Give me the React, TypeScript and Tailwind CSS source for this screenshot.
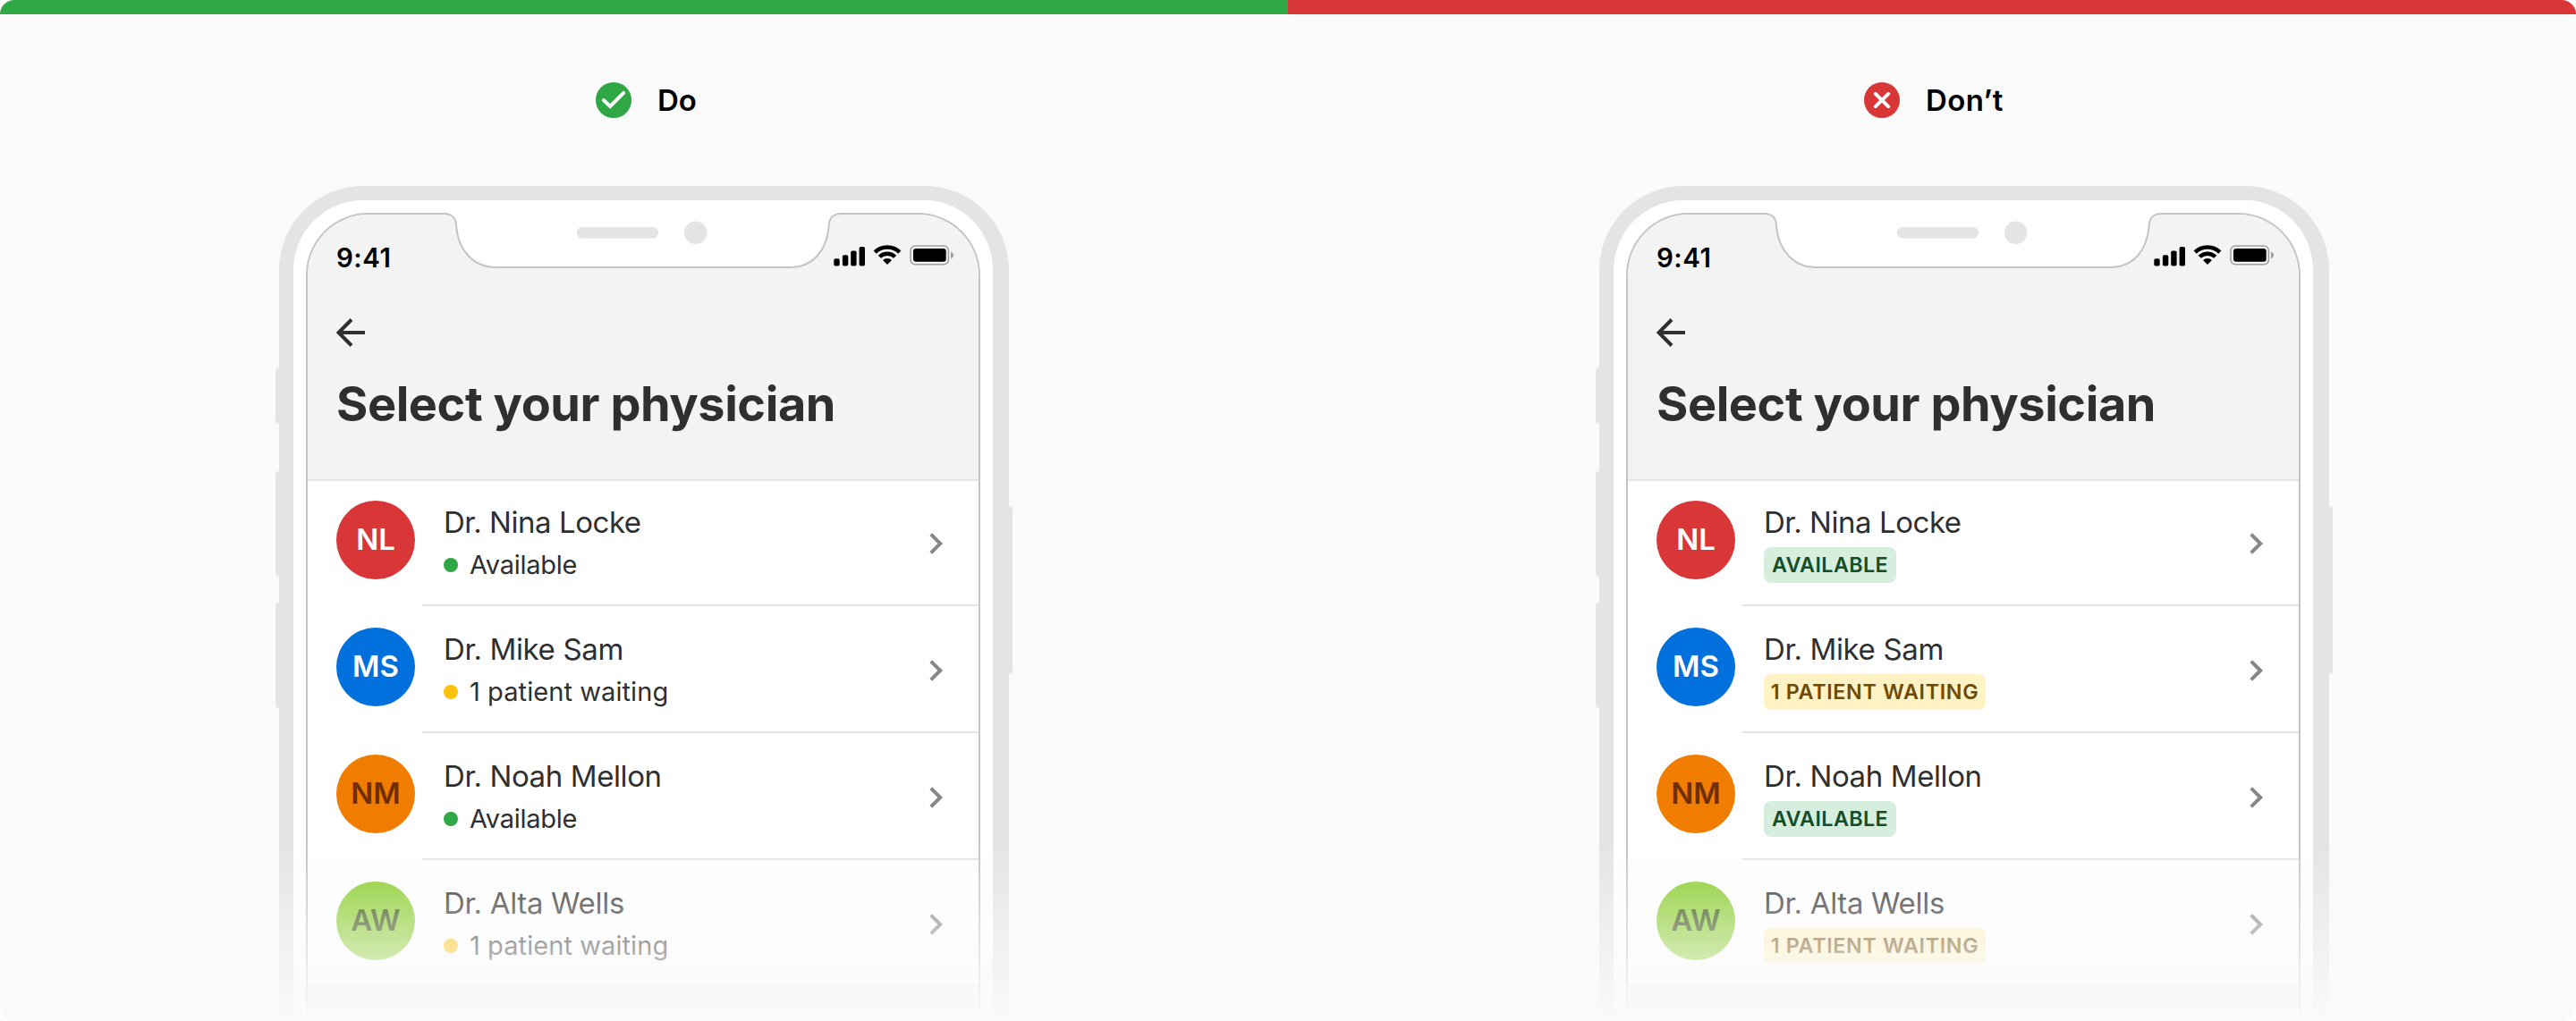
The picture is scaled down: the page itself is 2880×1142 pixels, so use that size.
import React from "react";

type Tone = "green" | "yellow";

interface Physician {
  name: string;
  nameTracking: string;
  initials: string;
  avatar: string;
  status: string;
  tone: Tone;
}

const physicians: Physician[] = [
  { name: "Dr. Nina Locke", nameTracking: "tracking-[-0.46px]", initials: "NL", avatar: "bg-[#d93737] text-white", status: "Available", tone: "green" },
  { name: "Dr. Mike Sam", nameTracking: "tracking-[-0.36px]", initials: "MS", avatar: "bg-[#0070dd] text-white", status: "1 patient waiting", tone: "yellow" },
  { name: "Dr. Noah Mellon", nameTracking: "tracking-[-0.39px]", initials: "NM", avatar: "bg-[#f07c00] text-[#6f2f00]", status: "Available", tone: "green" },
  { name: "Dr. Alta Wells", nameTracking: "tracking-[-0.32px]", initials: "AW", avatar: "bg-[#86cc27] text-[#2f4a09]", status: "1 patient waiting", tone: "yellow" },
];

const dotTones: Record<Tone, string> = {
  green: "bg-[#2ea744]",
  yellow: "bg-[#ffc10a]",
};

const statusTracking: Record<Tone, string> = {
  green: "tracking-[-0.25px]",
  yellow: "tracking-[0.08px]",
};

const badgeTones: Record<Tone, string> = {
  green: "w-[148px] bg-[#d6eedd] text-[#154d26] tracking-[0.41px]",
  yellow: "w-[248px] bg-[#fff2c4] text-[#6e4a07] tracking-[0.67px]",
};

function StatusDot({ physician }: { physician: Physician }) {
  return (
    <div className="flex h-10 items-center gap-[13px]">
      <span className={`size-4 rounded-full ${dotTones[physician.tone]}`} />
      <span className={`text-[29px] leading-10 ${statusTracking[physician.tone]}`}>{physician.status}</span>
    </div>
  );
}

function StatusBadge({ physician }: { physician: Physician }) {
  return (
    <div className={`flex h-10 items-center justify-center whitespace-nowrap rounded-lg text-[23.3px] font-semibold uppercase ${badgeTones[physician.tone]}`}>
      {physician.status}
    </div>
  );
}

function StatusIcons() {
  return (
    <svg width="136" height="28" viewBox="0 0 136 28" fill="none">
      <g fill="#000">
        <rect x="0.3" y="15.3" width="6.4" height="8.3" rx="1.8" />
        <rect x="9.9" y="11.3" width="6.4" height="12.3" rx="1.8" />
        <rect x="19.2" y="6.5" width="6.4" height="17.1" rx="1.8" />
        <rect x="28.6" y="2" width="6.4" height="21.6" rx="1.8" />
        <path d="M60 22L55 17A7 7 0 0 1 65 17Z" />
        <rect x="89" y="4" width="36.7" height="14.8" rx="3" />
      </g>
      <path d="M46.2 8.2A19.5 19.5 0 0 1 73.8 8.2" stroke="#000" strokeWidth="4.6" />
      <path d="M51.3 13.3A12.3 12.3 0 0 1 68.7 13.3" stroke="#000" strokeWidth="4.4" />
      <rect x="86" y="1" width="42.4" height="20.8" rx="5.3" stroke="#a0a0a0" strokeWidth="1.6" />
      <path d="M131 7.5C133 8.4 134 9.8 134 11.4C134 13 133 14.3 131 15.2Z" fill="#a0a0a0" />
    </svg>
  );
}

function Notch() {
  return (
    <svg className="absolute left-0 top-0" width="754" height="66" viewBox="0 0 754 66" fill="none">
      <path
        d="M155 0V1C163 1 167.6 6 168 14C170 42 187 61 213 61H541C567 61 582.7 42 584.7 14C585.1 6 590 1 598 1V0Z"
        fill="#fff"
      />
      <path
        d="M155 1C163 1 167.6 6 168 14C170 42 187 61 213 61H541C567 61 582.7 42 584.7 14C585.1 6 590 1 598 1"
        stroke="#c4c4c4"
        strokeWidth="2"
      />
      <rect x="302.7" y="16" width="91.3" height="12.6" rx="6.3" fill="#e4e4e4" />
      <circle cx="435.7" cy="22.2" r="12.8" fill="#e4e4e4" />
    </svg>
  );
}

function PhysicianRow({ physician, badge }: { physician: Physician; badge: boolean }) {
  return (
    <li className="flex h-[142px] pl-8">
      <div className={`mt-6 flex size-[88px] shrink-0 items-center justify-center rounded-full text-[33px] font-semibold ${physician.avatar}`}>
        {physician.initials}
      </div>
      <div className="ml-2 flex grow justify-between border-b-2 border-[#e4e4e4] pl-6 pr-[38px]">
        <div className="flex flex-col gap-2 pt-7">
          <span className={`text-[33px] leading-10 ${physician.nameTracking}`}>{physician.name}</span>
          {badge ? <StatusBadge physician={physician} /> : <StatusDot physician={physician} />}
        </div>
        <svg className="mt-[58px]" width="18" height="28" viewBox="0 0 18 28" fill="none">
          <path d="M2.8 3.6L13.2 14L2.8 24.4" stroke="#868686" strokeWidth="4" />
        </svg>
      </div>
    </li>
  );
}

function Phone({ badge }: { badge: boolean }) {
  return (
    <div className="relative h-[934px] w-[824px] px-1">
      <span className="absolute left-0 top-[203px] h-[63px] w-3 rounded-[4px] bg-[#e4e4e4]" />
      <span className="absolute left-0 top-[319px] h-[118px] w-3 rounded-[4px] bg-[#e4e4e4]" />
      <span className="absolute left-0 top-[466px] h-[118px] w-3 rounded-[4px] bg-[#e4e4e4]" />
      <span className="absolute right-0 top-[358px] h-[188px] w-3 rounded-[4px] bg-[#e4e4e4]" />
      <div className="relative h-full rounded-t-[94px] border-l-16 border-r-18 border-t-16 border-[#e4e4e4] bg-white px-3.5 pt-3.5">
        <div className="relative h-full">
          <div className="h-full overflow-hidden rounded-t-[70px] border-x-2 border-t-2 border-[#c4c4c4] bg-white text-[#2f2f2f]">
            <header className="-mb-[2px] h-[298px] border-b-2 border-[#e4e4e4] bg-[#f3f3f3] pt-7">
              <div className="flex h-10 items-center justify-between pl-8 pr-[26px]">
                <span className="text-[29.5px] font-semibold tracking-[0.5px] text-black">9:41</span>
                <StatusIcons />
              </div>
              <svg className="ml-8 mt-12" width="32" height="32" viewBox="0 0 32 32" fill="none">
                <path d="M32 16H3.5M17 1.5L2.6 16L17 30.5" stroke="#2f2f2f" strokeWidth="4" />
              </svg>
              <h2 className="mt-8 pl-8 text-[54px] font-bold leading-[64px] tracking-[-0.44px]">Select your physician</h2>
            </header>
            <ul>
              {physicians.map((p) => (
                <PhysicianRow key={p.initials} physician={p} badge={badge} />
              ))}
            </ul>
            <div className="-mt-[2px] h-12 border-t-2 border-[#e4e4e4] bg-[#f3f3f3]" />
          </div>
          <Notch />
        </div>
      </div>
    </div>
  );
}

function CheckIcon() {
  return (
    <svg width="40" height="40" viewBox="0 0 40 40" fill="none">
      <circle cx="20" cy="20" r="20" fill="#2ea744" />
      <path d="M8.8 20L16.2 27L31.2 11.8" stroke="#fff" strokeWidth="4" strokeLinecap="round" />
    </svg>
  );
}

function CrossIcon() {
  return (
    <svg width="40" height="40" viewBox="0 0 40 40" fill="none">
      <circle cx="20" cy="20" r="20" fill="#d93737" />
      <path d="M12.8 12.8L27.2 27.2M27.2 12.8L12.8 27.2" stroke="#fff" strokeWidth="4" strokeLinecap="round" />
    </svg>
  );
}

export default function App() {
  return (
    <div className="h-[1142px] w-[2880px] bg-white font-['Inter',sans-serif]">
      <main className="relative flex h-full overflow-hidden rounded-[16px] bg-[#fafafa]">
        <section className="w-[1440px] border-t-16 border-[#2ea744]">
          <div className="flex h-[192px] items-start justify-center gap-[29px] pl-[5px] pt-[76px]">
            <CheckIcon />
            <h1 className="text-[33px] font-semibold leading-10 text-black">Do</h1>
          </div>
          <div className="pl-[308px]">
            <Phone badge={false} />
          </div>
        </section>
        <section className="w-[1440px] border-t-16 border-[#d93737]">
          <div className="flex h-[192px] items-start justify-center gap-[29px] pl-[4px] pt-[76px]">
            <CrossIcon />
            <h1 className="text-[33px] font-semibold leading-10 tracking-[0.35px] text-black">Don’t</h1>
          </div>
          <div className="pl-[344px]">
            <Phone badge />
          </div>
        </section>
        <div className="absolute inset-x-0 bottom-0 h-[200px] bg-linear-to-b from-[#fafafa]/0 to-[#fafafa]" />
      </main>
    </div>
  );
}
